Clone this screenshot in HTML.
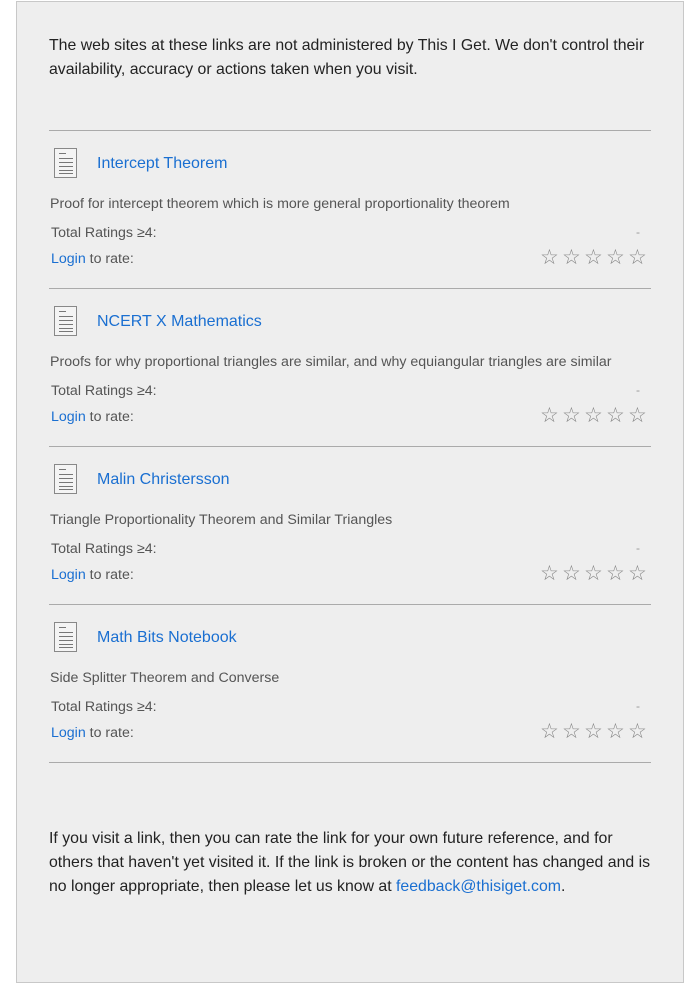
<!DOCTYPE html>
<html><head><style>
body{margin:0;background:#fff;font-family:"Liberation Sans",sans-serif;width:700px;height:963px;overflow:hidden;position:relative}
.box{position:absolute;left:16px;top:1px;width:666px;height:980px;background:#eeeeee;border:1px solid #c8c8c8}
.p{position:absolute;left:49px;width:610px;font-size:15.85px;line-height:24px;color:#222}
.hr{position:absolute;left:49px;width:602px;height:1px;background:#aaa}
.item{position:absolute;left:0;width:700px;height:158px}
.ic{position:absolute;left:54px;top:18px;width:23px;height:30px;border:1px solid #888;box-sizing:border-box;background:#f4f4f4}
.ic i{position:absolute;left:4px;height:1px;background:#777;width:14px}
.t{position:absolute;left:97px;top:25px;font-size:16px;color:#1a6fd1}
.d{position:absolute;left:50px;top:66px;font-size:14.2px;color:#555}
.r{position:absolute;left:51px;top:95px;font-size:14.2px;color:#555}
.l{position:absolute;left:51px;top:121px;font-size:14.2px;color:#555}
.l a{color:#1a6fd1}
.dash{position:absolute;left:636px;top:95px;font-size:12px;color:#999}
.st{position:absolute;left:540px;top:117px;font-size:21px;color:#888;line-height:22px}
.st span{display:inline-block;width:22px}
a{text-decoration:none;color:#1a6fd1}
</style></head><body>
<div class="box"></div>
<div class="p" style="top:34px">The web sites at these links are not administered by This I Get. We don't control their availability, accuracy or actions taken when you visit.</div>
<div class="hr" style="top:130px"></div>

<div class="item" style="top:130px">
<div class="ic"><i style="top:4px;width:7px"></i><i style="top:9px"></i><i style="top:13px"></i><i style="top:17px"></i><i style="top:21px"></i><i style="top:24px"></i></div>
<div class="t">Intercept Theorem</div>
<div class="d">Proof for intercept theorem which is more general proportionality theorem</div>
<div class="r">Total Ratings ≥4:</div><div class="dash">-</div>
<div class="l"><a>Login</a> to rate:</div><div class="st"><span>☆</span><span>☆</span><span>☆</span><span>☆</span><span>☆</span></div>
</div>
<div class="hr" style="top:288px"></div>
<div class="item" style="top:288px">
<div class="ic"><i style="top:4px;width:7px"></i><i style="top:9px"></i><i style="top:13px"></i><i style="top:17px"></i><i style="top:21px"></i><i style="top:24px"></i></div>
<div class="t">NCERT X Mathematics</div>
<div class="d">Proofs for why proportional triangles are similar, and why equiangular triangles are similar</div>
<div class="r">Total Ratings ≥4:</div><div class="dash">-</div>
<div class="l"><a>Login</a> to rate:</div><div class="st"><span>☆</span><span>☆</span><span>☆</span><span>☆</span><span>☆</span></div>
</div>
<div class="hr" style="top:446px"></div>
<div class="item" style="top:446px">
<div class="ic"><i style="top:4px;width:7px"></i><i style="top:9px"></i><i style="top:13px"></i><i style="top:17px"></i><i style="top:21px"></i><i style="top:24px"></i></div>
<div class="t">Malin Christersson</div>
<div class="d">Triangle Proportionality Theorem and Similar Triangles</div>
<div class="r">Total Ratings ≥4:</div><div class="dash">-</div>
<div class="l"><a>Login</a> to rate:</div><div class="st"><span>☆</span><span>☆</span><span>☆</span><span>☆</span><span>☆</span></div>
</div>
<div class="hr" style="top:604px"></div>
<div class="item" style="top:604px">
<div class="ic"><i style="top:4px;width:7px"></i><i style="top:9px"></i><i style="top:13px"></i><i style="top:17px"></i><i style="top:21px"></i><i style="top:24px"></i></div>
<div class="t">Math Bits Notebook</div>
<div class="d">Side Splitter Theorem and Converse</div>
<div class="r">Total Ratings ≥4:</div><div class="dash">-</div>
<div class="l"><a>Login</a> to rate:</div><div class="st"><span>☆</span><span>☆</span><span>☆</span><span>☆</span><span>☆</span></div>
</div>
<div class="hr" style="top:762px"></div>

<div class="p" style="top:827px">If you visit a link, then you can rate the link for your own future reference, and for others that haven't yet visited it. If the link is broken or the content has changed and is no longer appropriate, then please let us know at <a>feedback@thisiget.com</a>.</div>
</body></html>
